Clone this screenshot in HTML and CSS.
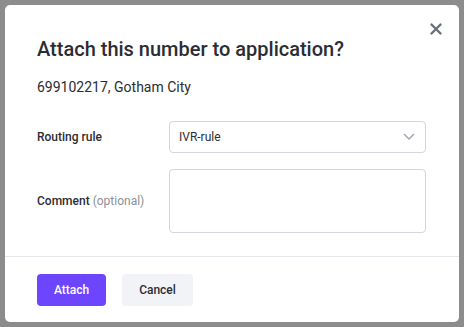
FILE: index.html
```html
<!DOCTYPE html>
<html lang="en">
<head>
  <meta charset="UTF-8">
  <meta name="viewport" content="width=device-width, initial-scale=1.0">
  <title>Attach number</title>
  <link rel="stylesheet" href="styles.css">
</head>
<body>
  <div class="modal">
    <button class="close" aria-label="Close">
      <svg width="12" height="12" viewBox="0 0 12 12"><path d="M1.5 1.5l9 9M10.5 1.5l-9 9" stroke="#6b6f78" stroke-width="2.4" stroke-linecap="round"/></svg>
    </button>
    <div class="body">
      <h1>Attach this number to application?</h1>
      <p class="number">699102217, Gotham City</p>
      <div class="row">
        <label>Routing rule</label>
        <div class="select">
          <span>IVR-rule</span>
          <svg width="12" height="8" viewBox="0 0 12 8"><path d="M1.5 1.5l4.5 4.5 4.5-4.5" fill="none" stroke="#a7abb3" stroke-width="1.6" stroke-linecap="round" stroke-linejoin="round"/></svg>
        </div>
      </div>
      <div class="row">
        <label>Comment <span class="muted">(optional)</span></label>
        <textarea></textarea>
      </div>
    </div>
    <div class="footer">
      <button class="btn primary">Attach</button>
      <button class="btn secondary">Cancel</button>
    </div>
  </div>
</body>
</html>
```

FILE: styles.css
```css
/* Global */
body {
  margin: 0;
  padding: 5px;
  background: #8c8c8c;
  font-family: Roboto, sans-serif;
  color: #2b2d33;
}
.modal {
  position: relative;
  width: 454px;
  height: 317px;
  background: #fff;
  border-radius: 5px;
  box-sizing: border-box;
}
.close {
  position: absolute;
  top: 18px;
  right: 17px;
  border: none;
  background: none;
  padding: 0;
  line-height: 0;
  cursor: pointer;
}
.body {
  padding: 30px 32px 0;
  height: 252px;
  box-sizing: border-box;
  border-bottom: 1px solid #e6e8ee;
}
h1 {
  margin: 0;
  font-size: 20px;
  font-weight: 500;
  line-height: 28px;
}
.number {
  margin: 14px 0 24px;
  font-size: 14px;
  line-height: 20px;
}
.row {
  display: flex;
  align-items: center;
  margin-bottom: 16px;
}
.row label {
  width: 132px;
  font-size: 12px;
  font-weight: 500;
}
.muted {
  color: #8b8f99;
  font-weight: 400;
}
.select {
  flex: 0 0 257px;
  height: 32px;
  box-sizing: border-box;
  border: 1px solid #d3d6dd;
  border-radius: 4px;
  display: flex;
  align-items: center;
  justify-content: space-between;
  padding: 0 10px 0 9px;
  font-size: 12px;
}
textarea {
  width: 257px;
  height: 64px;
  box-sizing: border-box;
  border: 1px solid #d3d6dd;
  border-radius: 4px;
  resize: none;
  margin: 0;
}
.footer {
  display: flex;
  gap: 16px;
  padding: 17px 32px 16px;
}
.btn {
  height: 32px;
  border: none;
  border-radius: 4px;
  font-family: Roboto, sans-serif;
  font-size: 12px;
  font-weight: 500;
  padding: 0 16px;
  cursor: pointer;
}
.primary {
  background: #6d45ff;
  color: #fff;
  width: 69px;
}
.secondary {
  background: #f2f3f7;
  color: #2b2d33;
  width: 71px;
}
```
